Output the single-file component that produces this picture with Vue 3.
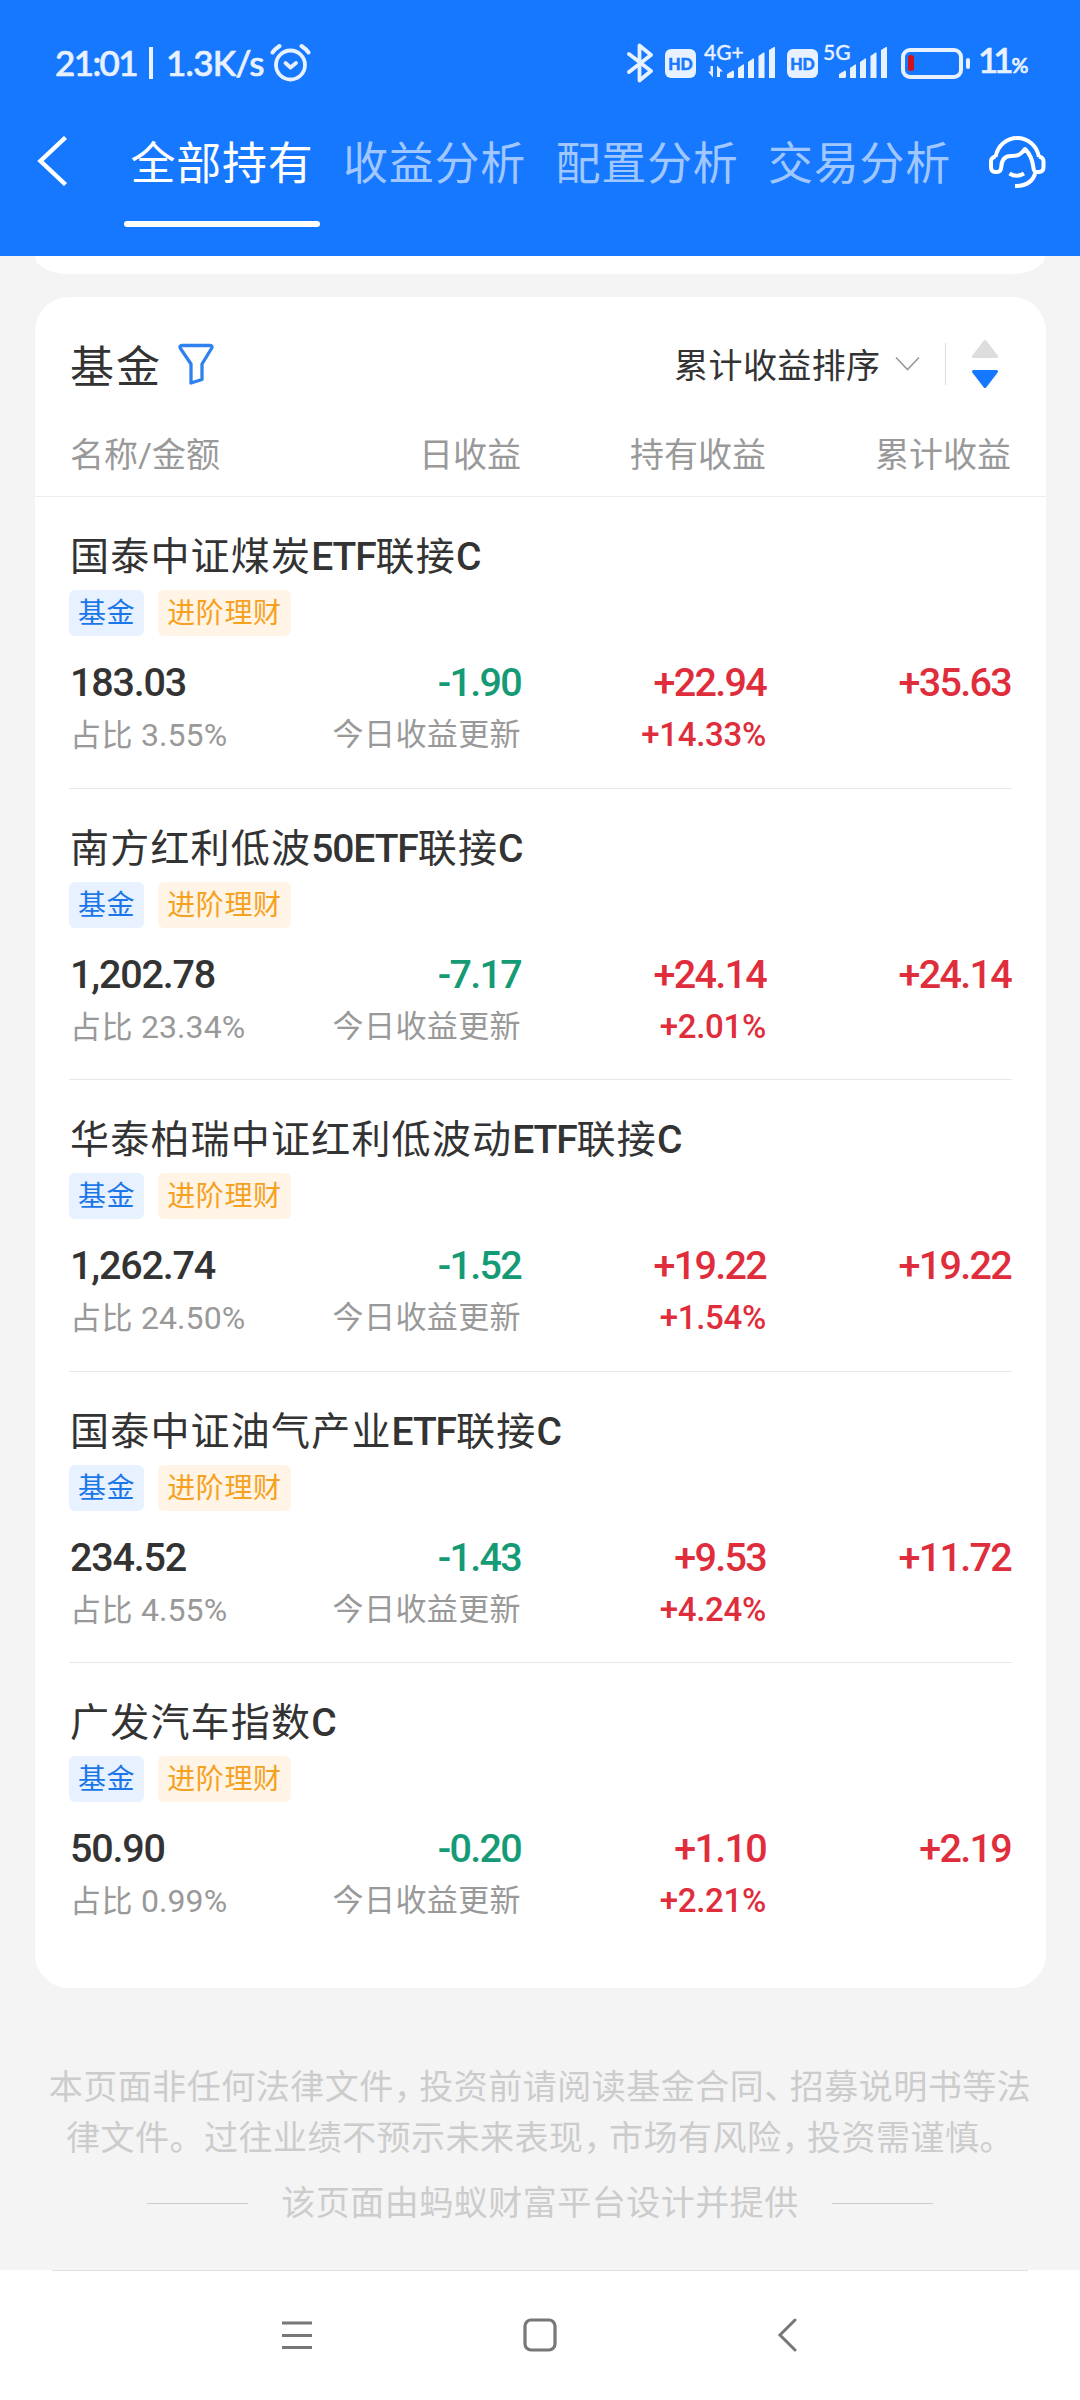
<script setup>
import { ref } from "vue";

const tabs = ["全部持有", "收益分析", "配置分析", "交易分析"];
const activeTab = ref(0);

const funds = ref([
  {
    name: "国泰中证煤炭ETF联接C",
    amount: "183.03",
    ratio: "3.55%",
    day: "-1.90",
    hold: "+22.94",
    holdRate: "+14.33%",
    total: "+35.63",
  },
  {
    name: "南方红利低波50ETF联接C",
    amount: "1,202.78",
    ratio: "23.34%",
    day: "-7.17",
    hold: "+24.14",
    holdRate: "+2.01%",
    total: "+24.14",
  },
  {
    name: "华泰柏瑞中证红利低波动ETF联接C",
    amount: "1,262.74",
    ratio: "24.50%",
    day: "-1.52",
    hold: "+19.22",
    holdRate: "+1.54%",
    total: "+19.22",
  },
  {
    name: "国泰中证油气产业ETF联接C",
    amount: "234.52",
    ratio: "4.55%",
    day: "-1.43",
    hold: "+9.53",
    holdRate: "+4.24%",
    total: "+11.72",
  },
  {
    name: "广发汽车指数C",
    amount: "50.90",
    ratio: "0.99%",
    day: "-0.20",
    hold: "+1.10",
    holdRate: "+2.21%",
    total: "+2.19",
  },
]);

const notice = [
  "本页面非任何法律文件，投资前请阅读基金合同、招募说明书等法",
  "律文件。过往业绩不预示未来表现，市场有风险，投资需谨慎。",
];

// latin letters and digits are set heavier than the chinese part
function splitName(name) {
  return name.split(/([A-Z0-9]+)/).filter((part) => part);
}

function isLatin(part) {
  return /^[A-Z0-9]+$/.test(part);
}

// commas take less room than a full character
function splitNotice(line) {
  return line.split(/([，、])/);
}
</script>

<template>
  <main>
    <header>
      <div class="status">
        <span class="time">21:01</span>
        <span class="bar"></span>
        <span class="speed">1.3K/s</span>
        <svg class="alarm" width="41" height="40" viewBox="0 0 41 40">
          <g fill="none" stroke="#e8f1ff" stroke-linecap="round">
            <circle cx="20.5" cy="22" r="14.5" stroke-width="3.8" />
            <path d="M2.500 9.500Q5 6 9.500 3M38.500 9.500Q36 6 31.500 3" stroke-width="4" />
            <path d="M15.500 20l5 4.500 5.500-4.500" stroke-width="3.8" stroke-linejoin="round" />
          </g>
        </svg>

        <svg class="bluetooth" width="26" height="40" viewBox="0 0 26 40">
          <path
            d="M2 11L24 28 12.500 37.500V2.500L24 12 2 29"
            fill="none"
            stroke="#e8f1ff"
            stroke-width="3.8"
            stroke-linecap="round"
            stroke-linejoin="round"
          />
        </svg>
        <span class="hd">HD</span>
        <div class="signal first">
          <span class="net">4G+</span>
          <svg width="67" height="32" viewBox="0 0 67 32" fill="#e8f1ff">
            <path d="M5 19v11.500L0 24.500h2.500V19zM9 30V18.500l6 6h-3V30z" />
            <path d="M19 31v-4l6-3.500q1 0 1 1V30l-1 1z" />
            <path d="M30 31V21l5-3.500h1V31z" />
            <path d="M40 31V15l5-3.500h1V31z" />
            <path d="M50.500 31V9l5-3.500h1V31z" />
            <path d="M61 31V3l5-3h1v31z" />
          </svg>
        </div>
        <span class="hd">HD</span>
        <div class="signal second">
          <span class="net">5G</span>
          <svg width="67" height="32" viewBox="0 0 67 32" fill="#e8f1ff">
            <path d="M19 31v-4l6-3.500q1 0 1 1V30l-1 1z" />
            <path d="M30 31V21l5-3.500h1V31z" />
            <path d="M40 31V15l5-3.500h1V31z" />
            <path d="M50.500 31V9l5-3.500h1V31z" />
            <path d="M61 31V3l5-3h1v31z" />
          </svg>
        </div>
        <svg class="battery" width="69" height="31" viewBox="0 0 69 31">
          <rect
            x="2"
            y="2"
            width="58"
            height="27"
            rx="7"
            fill="none"
            stroke="#e8f1ff"
            stroke-width="4"
          />
          <rect x="65" y="10" width="4" height="11" rx="2" fill="#e8f1ff" />
          <rect x="7" y="7" width="6" height="16" rx="2.500" fill="#d0111b" />
        </svg>
        <span class="percent">11<small>%</small></span>
      </div>

      <nav>
        <svg class="back" width="32" height="50" viewBox="0 0 32 50">
          <path d="M28.500 1.500L3.500 25l25 23.500" fill="none" stroke="#fff" stroke-width="4.400" />
        </svg>
        <div class="tabs">
          <button
            v-for="(tab, i) in tabs"
            :key="tab"
            :class="{ active: i === activeTab }"
            @click="activeTab = i"
          >
            {{ tab }}
          </button>
        </div>
        <svg class="service" width="57" height="54" viewBox="0 0 57 54">
          <g fill="none" stroke="#fff" stroke-width="4" stroke-linejoin="round">
            <path d="M6.500 21C8.500 9.500 17.500 2 28.200 2S48 9.500 50 21" />
            <path
              d="M6.500 20.500q-4.500 1-4.500 5V31q0 5 4.500 5H8q4 0 4.200-4.500C12.500 24 16 20 22 20c7 0 9.500-1 14-7 5 5 7.500 10 8.300 18 .3 3.500 1 5 3.700 5h2q4.500 0 4.500-5v-5.500q0-4-4.500-5"
            />
            <path d="M20.500 37.500q7 4.500 14.500 0" />
            <path d="M46.500 36C44.500 45 38 50 26 50" />
          </g>
        </svg>
      </nav>
    </header>

    <div class="previous"></div>

    <section class="card">
      <div class="card-head">
        <h1>基金</h1>
        <svg class="filter" width="36" height="42" viewBox="0 0 36 42">
          <path
            d="M4 2.500h28q3 0 1.500 3L24 21v15.500l-11 3.500V21L2.500 5.500Q1 2.500 4 2.500z"
            fill="none"
            stroke="#2f82ee"
            stroke-width="3.300"
            stroke-linejoin="round"
          />
        </svg>
        <span class="sort">累计收益排序</span>
        <svg class="arrow" width="25" height="16" viewBox="0 0 25 16">
          <path d="M1 1.500l11.500 12L24 1.500" fill="none" stroke="#999" stroke-width="1.600" />
        </svg>
        <span class="line"></span>
        <svg class="order" width="28" height="50" viewBox="0 0 28 50">
          <path
            d="M14 2.500L25.500 17.500h-23z"
            fill="#ddd"
            stroke="#ddd"
            stroke-width="3"
            stroke-linejoin="round"
          />
          <path
            d="M14 47.500L25.500 32.500h-23z"
            fill="#1677ff"
            stroke="#1677ff"
            stroke-width="3"
            stroke-linejoin="round"
          />
        </svg>
      </div>

      <div class="columns">
        <span>名称/金额</span>
        <span>日收益</span>
        <span>持有收益</span>
        <span>累计收益</span>
      </div>

      <div class="fund" v-for="fund in funds" :key="fund.name">
        <h2>
          <span
            v-for="(part, i) in splitName(fund.name)"
            :key="i"
            :class="{ latin: isLatin(part) }"
            >{{ part }}</span
          >
        </h2>
        <div class="tags">
          <span class="tag blue">基金</span>
          <span class="tag orange">进阶理财</span>
        </div>
        <div class="values">
          <span>{{ fund.amount }}</span>
          <span class="green">{{ fund.day }}</span>
          <span class="red">{{ fund.hold }}</span>
          <span class="red">{{ fund.total }}</span>
        </div>
        <div class="details">
          <span>占比 <i>{{ fund.ratio }}</i></span>
          <span>今日收益更新</span>
          <span class="rate">{{ fund.holdRate }}</span>
        </div>
      </div>
    </section>

    <footer>
      <p v-for="line in notice" :key="line">
        <span
          v-for="(part, i) in splitNotice(line)"
          :key="i"
          :class="{ comma: i % 2 === 1 }"
          >{{ part }}</span
        >
      </p>
      <div class="provider">该页面由蚂蚁财富平台设计并提供</div>
    </footer>

    <div class="system-bar">
      <svg width="30" height="32" viewBox="0 0 30 32">
        <path d="M0 4h30M0 16.500h30M0 28.500h30" stroke="#777" stroke-width="3" />
      </svg>
      <svg class="home" width="34" height="34" viewBox="0 0 34 34">
        <rect
          x="2"
          y="2"
          width="30"
          height="30"
          rx="6"
          fill="none"
          stroke="#777"
          stroke-width="3.200"
        />
      </svg>
      <svg width="20" height="34" viewBox="0 0 20 34">
        <path d="M18 2L3 17l15 15" fill="none" stroke="#777" stroke-width="3" stroke-linecap="round" />
      </svg>
    </div>
  </main>
</template>

<style>
body {
  margin: 0;
  background-color: #f4f4f4;
}
</style>

<style scoped>
main {
  width: 1080px;
  height: 2400px;
  display: flex;
  flex-direction: column;
  overflow: hidden;
  background-color: #f4f4f4;
  color: #333;
  font-family: Roboto, "Noto Sans CJK SC", sans-serif;
}

svg {
  display: block;
  flex: none;
}

header {
  height: 256px;
  flex: none;
  background-color: #1677ff;
}

.status {
  height: 56px;
  padding: 35px 54px 0 55px;
  display: flex;
  align-items: center;
  color: #e8f1ff;
  font-family: Lato, sans-serif;
  font-size: 35px;
  font-weight: 500;
  line-height: 56px;
  -webkit-text-stroke: 0.7px #e8f1ff;
}

.time {
  width: 94px;
  letter-spacing: -1.6px;
}

.bar {
  width: 4px;
  height: 32px;
  background-color: #e8f1ff;
}

.speed {
  width: 102px;
  margin-left: 13px;
  letter-spacing: -0.7px;
  white-space: nowrap;
}

.time,
.speed,
.percent {
  position: relative;
  top: -1px;
}

.alarm {
  margin-left: 2px;
}

.bluetooth {
  margin-left: auto;
}

.hd {
  width: 31px;
  height: 29px;
  margin-left: 12px;
  border-radius: 6px;
  background-color: #e8f1ff;
  color: #1677ff;
  font-size: 16px;
  font-weight: 900;
  line-height: 29px;
  text-align: center;
  -webkit-text-stroke: 0.5px #1677ff;
}

.signal {
  position: relative;
  margin-left: 12px;
}

.signal.second {
  margin-left: 2px;
}

.net {
  position: absolute;
  left: -4px;
  top: -6px;
  font-size: 21px;
  line-height: 22px;
  -webkit-text-stroke: 0.3px #e8f1ff;
}

.signal.second .net {
  left: 3px;
}

.battery {
  margin-left: 14px;
}

.percent {
  width: 48px;
  margin-left: 8px;
  white-space: nowrap;
  letter-spacing: -5px;
}

.percent small {
  font-size: 21px;
  letter-spacing: 0;
  margin-left: 3px;
}

nav {
  height: 136px;
  padding: 0 34px 0 37px;
  display: flex;
}

.back {
  margin-top: 45px;
}

.tabs {
  display: flex;
  gap: 16.5px;
  margin-left: 55px;
}

.tabs button {
  position: relative;
  width: 196px;
  height: 136px;
  padding: 12px 0 0;
  border: none;
  background: none;
  color: #a0c7ff;
  font-family: inherit;
  font-size: 45px;
  letter-spacing: 0.8px;
  line-height: 124px;
  text-align: center;
  white-space: nowrap;
  cursor: pointer;
}

.tabs .active {
  color: #fff;
}

.tabs .active::after {
  content: "";
  position: absolute;
  left: 0;
  right: 0;
  bottom: 0;
  height: 6px;
  border-radius: 3px;
  background-color: #fff;
}

.service {
  margin-left: auto;
  margin-top: 45px;
}

.previous {
  height: 18px;
  margin: 0 35px;
  flex: none;
  background-color: #fff;
  border-radius: 0 0 34px 34px / 0 0 18px 18px;
}

.card {
  height: 1691px;
  margin: 23px 34px 0 35px;
  flex: none;
  border-radius: 34px;
  background-color: #fff;
}

.card-head {
  height: 134px;
  padding: 0 47.5px 0 35px;
  display: flex;
  align-items: center;
}

h1 {
  margin: 0;
  font-size: 44px;
  font-weight: 400;
  letter-spacing: 2px;
}

.filter {
  margin-left: 16px;
}

.sort {
  margin-left: auto;
  padding-bottom: 2px;
  font-size: 34px;
  letter-spacing: 0.4px;
}

.arrow {
  margin-left: 14px;
}

.line {
  width: 1px;
  height: 42px;
  margin: 0 25px;
  background-color: #ddd;
}

.columns,
.values,
.details {
  display: grid;
  grid-template-columns: 200px 251px 245px 245px;
  padding-left: 35px;
}

.columns span:not(:first-child),
.values span:not(:first-child),
.details span:not(:first-child) {
  text-align: right;
}

.columns {
  height: 65px;
  border-bottom: 1px solid #eee;
  color: #999;
  font-size: 34px;
  line-height: 49px;
}

.fund {
  height: 256.6px;
  padding-top: 35px;
  position: relative;
}

.fund:not(:last-child)::after {
  content: "";
  position: absolute;
  left: 34px;
  right: 34px;
  bottom: 0;
  height: 1px;
  background-color: #e8e8e8;
}

h2 {
  margin: 0 0 8px 35px;
  font-size: 39px;
  font-weight: 400;
  letter-spacing: 1.2px;
  line-height: 50px;
  white-space: nowrap;
}

.latin {
  font-weight: 500;
  letter-spacing: -1.1px;
}

.tags {
  display: flex;
  gap: 14px;
  margin-left: 34px;
}

.tag {
  height: 46px;
  padding: 0 9px;
  border-radius: 6px;
  font-size: 28px;
  letter-spacing: 0.6px;
  line-height: 47px;
}

.blue {
  background-color: #e7f1ff;
  color: #1b77e8;
}

.orange {
  background-color: #fff4e5;
  color: #f5a122;
}

.values {
  margin-top: 27px;
  font-size: 39.5px;
  font-weight: 500;
  letter-spacing: -1.2px;
  line-height: 40px;
}

.values .green,
.values .red {
  letter-spacing: -1.7px;
}

.details {
  margin-top: 12px;
  color: #999;
  font-size: 31px;
  letter-spacing: 0.4px;
  line-height: 40px;
  white-space: nowrap;
}

.details i {
  font-size: 32px;
  font-style: normal;
  letter-spacing: 0.1px;
}

.green {
  color: #159a76;
}

.red,
.details .rate {
  color: #e02d3c;
}

.details .rate {
  font-size: 33px;
  font-weight: 500;
  letter-spacing: -0.3px;
}

footer {
  height: 208px;
  padding-top: 74px;
  flex: none;
  color: #ccc;
  font-size: 34px;
  letter-spacing: 0.5px;
  line-height: 51px;
  text-align: center;
  white-space: nowrap;
}

footer p {
  margin: 0;
}

.comma {
  letter-spacing: -8.5px;
}

.provider {
  display: flex;
  align-items: center;
  justify-content: center;
  gap: 33px;
  margin-top: 14px;
}

.provider::before,
.provider::after {
  content: "";
  width: 101px;
  height: 1px;
  background-color: #ccc;
}

.system-bar {
  position: relative;
  height: 130px;
  padding: 0 283px 0 282px;
  flex: none;
  display: flex;
  align-items: center;
  justify-content: space-between;
  background-color: #fff;
}

.home {
  margin-right: 10px;
}

.system-bar::before {
  content: "";
  position: absolute;
  left: 52px;
  right: 52px;
  top: 0;
  height: 1px;
  background-color: #e0e0e0;
}
</style>
